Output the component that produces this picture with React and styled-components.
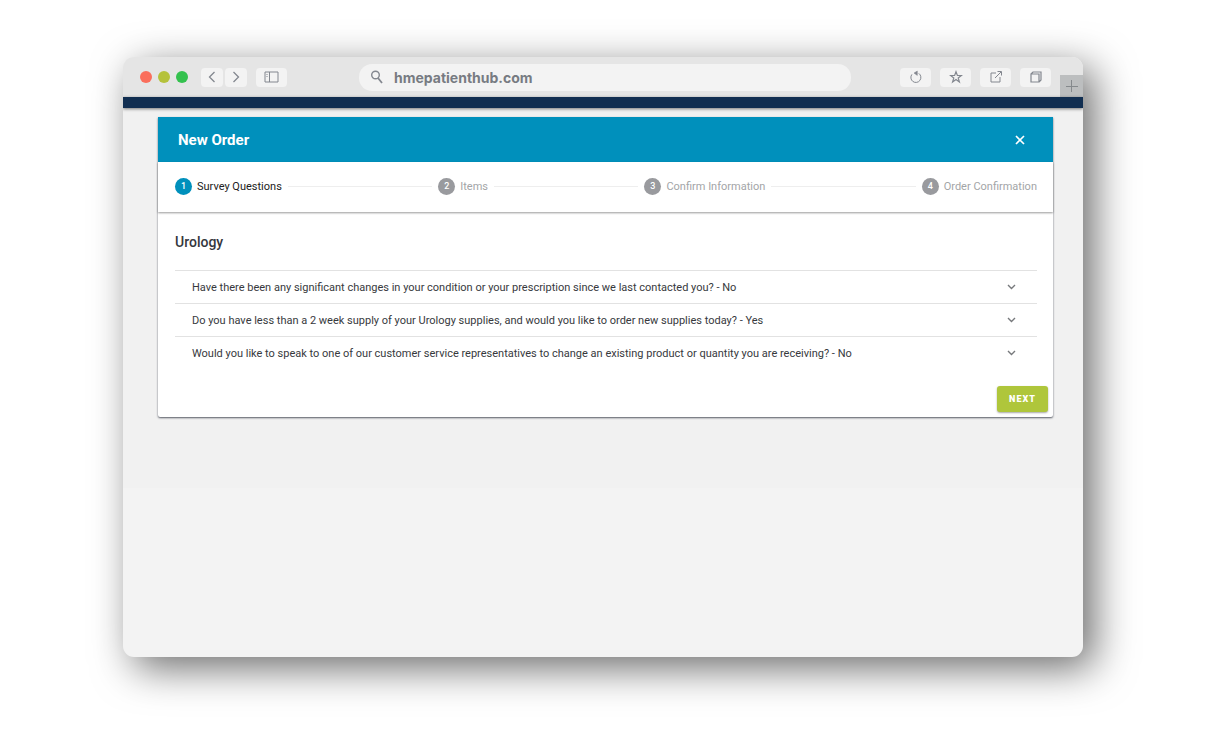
import React, { useState } from "react"
import styled, { createGlobalStyle } from "styled-components"

const GlobalStyle = createGlobalStyle`
	* {
		box-sizing: border-box;
	}
	body {
		margin: 0;
		background: #ffffff;
		font-family: Roboto, sans-serif;
	}
	button {
		border: none;
		padding: 0;
		font-family: inherit;
		cursor: pointer;
	}
`

const Page = styled.div`
	padding: 57px 123px 78px;
`

const BrowserWindow = styled.div`
	background: #f3f3f3;
	border-radius: 11px;
	overflow: hidden;
	box-shadow: 11px 11px 40px rgba(0, 0, 0, 0.58);
`

const Toolbar = styled.div`
	display: grid;
	grid-template-columns: 236px 1fr 232px;
	align-items: center;
	height: 40px;
	background: #e5e5e5;
`

const ToolbarLeft = styled.div`
	display: flex;
	align-items: center;
	padding-left: 17px;
`

const Dots = styled.div`
	display: flex;
	gap: 6px;
	margin-right: 13px;
`

const Dot = styled.span`
	width: 12px;
	height: 12px;
	border-radius: 50%;
	background: ${(props) => props.$color};
`

const ToolButton = styled.button`
	display: flex;
	align-items: center;
	justify-content: center;
	width: ${(props) => (props.$small ? 22 : 31)}px;
	height: 19px;
	border-radius: 4px;
	background: #f3f3f3;
	color: #83878f;
`

const NavButtons = styled.div`
	display: flex;
	gap: 2px;
	margin-right: 9px;
`

const AddressBar = styled.label`
	display: flex;
	align-items: center;
	gap: 10px;
	height: 27px;
	padding: 0 11px;
	border-radius: 13px;
	background: #f3f3f3;
	color: #83878f;
`

const AddressInput = styled.input`
	flex: 1;
	min-width: 0;
	padding: 0;
	border: none;
	background: transparent;
	outline: none;
	color: #777b82;
	font-family: Inter, sans-serif;
	font-size: 14px;
	font-weight: 700;
`

const ToolbarRight = styled.div`
	display: flex;
	align-items: center;
	justify-content: flex-end;
	gap: 9px;
	height: 100%;
`

const NewTab = styled.button`
	display: flex;
	align-items: center;
	justify-content: center;
	align-self: flex-end;
	width: 23px;
	height: 22px;
	background: #bcbebf;
	color: #85898c;
`

const AppBar = styled.div`
	position: relative;
	height: 11px;
	background: #112e51;
	box-shadow: 0 1px 3px rgba(0, 0, 0, 0.5);
`

const Content = styled.main`
	min-height: 380px;
	padding: 9px 30px 71px 35px;
	background: #f1f1f1;
`

const WindowFooter = styled.div`
	height: 169px;
`

const OrderCard = styled.section`
	background: #ffffff;
	border-radius: 0 0 2px 2px;
	box-shadow: 0 1px 2px rgba(20, 25, 40, 0.7);
`

const CardHeader = styled.header`
	display: flex;
	align-items: center;
	justify-content: space-between;
	height: 45px;
	padding: 0 27px 0 20px;
	background: #0090bc;
	color: #ffffff;
`

const CardTitle = styled.h1`
	margin: 0;
	font-size: 15px;
	font-weight: 700;
`

const CloseButton = styled.button`
	display: flex;
	background: transparent;
	color: #ffffff;
`

const Steps = styled.ol`
	display: flex;
	align-items: center;
	gap: 6px;
	height: 50px;
	margin: 0;
	padding: 0 16px 2px 17px;
	list-style: none;
	box-shadow: 0 1px 2px rgba(0, 0, 0, 0.4);
`

const Step = styled.li`
	display: flex;
	align-items: center;
	gap: 5px;
	color: ${(props) => (props.$active ? "#212121" : "#a3a5a7")};
	font-size: 11px;
	white-space: nowrap;
`

const StepNumber = styled.span`
	width: 17px;
	height: 17px;
	border-radius: 50%;
	background: ${(props) => (props.$active ? "#0090bc" : "#999a9e")};
	color: #ffffff;
	font-size: 9px;
	font-weight: 500;
	line-height: 17px;
	text-align: center;
`

const StepLine = styled.li`
	flex: 1;
	height: 1px;
	background: #eeeeee;
`

const Survey = styled.div`
	padding: 20px 16px 0 17px;
`

const SurveyTitle = styled.h2`
	margin: 0 0 18px;
	color: #35373d;
	font-size: 14px;
	font-weight: 500;
	line-height: 20px;
`

const Question = styled.button`
	display: flex;
	align-items: center;
	justify-content: space-between;
	width: 100%;
	min-height: 33px;
	padding: 0 20px 0 17px;
	border-top: 1px solid #e2e2e2;
	background: transparent;
	color: #37393d;
	font-size: 11px;
	text-align: left;

	svg {
		color: #77797c;
	}
`

const CardActions = styled.div`
	display: flex;
	justify-content: flex-end;
	padding: 17px 5px 5px;
`

const NextButton = styled.button`
	width: 51px;
	height: 26px;
	border-radius: 3px;
	background: #afc63b;
	color: #ffffff;
	font-size: 9px;
	font-weight: 900;
	letter-spacing: 1px;
	box-shadow: 0 1px 2px rgba(0, 0, 0, 0.35);
`

const Icon = ({ width = 14, height = 14, stroke = 1, children }) => (
	<svg
		width={width}
		height={height}
		viewBox={`0 0 ${width} ${height}`}
		fill='none'
		stroke='currentColor'
		strokeWidth={stroke}
		aria-hidden='true'
	>
		{children}
	</svg>
)

const steps = ["Survey Questions", "Items", "Confirm Information", "Order Confirmation"]

const questions = [
	"Have there been any significant changes in your condition or your prescription since we last contacted you? - No",
	"Do you have less than a 2 week supply of your Urology supplies, and would you like to order new supplies today? - Yes",
	"Would you like to speak to one of our customer service representatives to change an existing product or quantity you are receiving? - No",
]

const BrowserToolbar = () => {
	const [address, setAddress] = useState("hmepatienthub.com")
	return (
		<Toolbar>
			<ToolbarLeft>
				<Dots>
					<Dot $color='#fa6e5c' />
					<Dot $color='#b5c23c' />
					<Dot $color='#34c14e' />
				</Dots>
				<NavButtons>
					<ToolButton $small aria-label='Back'>
						<Icon stroke={1.3}>
							<path d='M9.5 2 4.5 7l5 5' />
						</Icon>
					</ToolButton>
					<ToolButton $small aria-label='Forward'>
						<Icon stroke={1.3}>
							<path d='m4.5 2 5 5-5 5' />
						</Icon>
					</ToolButton>
				</NavButtons>
				<ToolButton aria-label='Sidebar'>
					<Icon width={15} height={12}>
						<path d='M1 1h13v10H1zM5.5 1v10' />
						<path d='M2 3.5h2M2 5.5h2' strokeOpacity='0.5' />
					</Icon>
				</ToolButton>
			</ToolbarLeft>
			<AddressBar>
				<Icon stroke={1.4}>
					<circle cx='5.5' cy='5' r='3.8' />
					<path d='m8 8 4 5' strokeWidth='1.8' />
				</Icon>
				<AddressInput
					aria-label='Address'
					value={address}
					onChange={(e) => setAddress(e.target.value)}
				/>
			</AddressBar>
			<ToolbarRight>
				<ToolButton aria-label='Reload'>
					<Icon>
						<path d='M2.9 4.4a5 5 0 1 0 6.9-1' />
						<path d='M8.3 1v4.4L5 3.1z' fill='currentColor' strokeWidth='0.5' />
					</Icon>
				</ToolButton>
				<ToolButton aria-label='Bookmark'>
					<Icon stroke={1.2}>
						<path d='m7 1.7 1.4 3.8h4L9.2 7.9l1.2 4L7 9.5l-3.4 2.4 1.2-4-3.2-2.4h4z' />
					</Icon>
				</ToolButton>
				<ToolButton aria-label='Share'>
					<Icon>
						<path d='M7 3H2v9h9V7M6 8l6-6M8.5 1.5h4v4' />
					</Icon>
				</ToolButton>
				<ToolButton aria-label='Tabs'>
					<Icon stroke={1.2}>
						<path d='M2 4h8v8H2zM2 4l2-2h8v8l-2 2' />
					</Icon>
				</ToolButton>
				<NewTab aria-label='New tab'>
					<Icon>
						<path d='M6.5 1v12M1 7.5h12' />
					</Icon>
				</NewTab>
			</ToolbarRight>
		</Toolbar>
	)
}

const Stepper = ({ current }) => (
	<Steps>
		{steps.map((label, i) => (
			<React.Fragment key={label}>
				{i > 0 && <StepLine aria-hidden='true' />}
				<Step $active={i === current}>
					<StepNumber $active={i === current}>{i + 1}</StepNumber>
					{label}
				</Step>
			</React.Fragment>
		))}
	</Steps>
)

const App = () => (
	<Page>
		<GlobalStyle />
		<BrowserWindow>
			<BrowserToolbar />
			<AppBar />
			<Content>
				<OrderCard>
					<CardHeader>
						<CardTitle>New Order</CardTitle>
						<CloseButton aria-label='Close'>
							<Icon width={12} height={12} stroke={1.7}>
								<path d='m2 2 8 8M10 2l-8 8' />
							</Icon>
						</CloseButton>
					</CardHeader>
					<Stepper current={0} />
					<Survey>
						<SurveyTitle>Urology</SurveyTitle>
						{questions.map((text) => (
							<Question key={text}>
								{text}
								<Icon width={11} height={8} stroke={1.4}>
									<path d='m2 2 3.5 3.5L9 2' />
								</Icon>
							</Question>
						))}
					</Survey>
					<CardActions>
						<NextButton>NEXT</NextButton>
					</CardActions>
				</OrderCard>
			</Content>
			<WindowFooter />
		</BrowserWindow>
	</Page>
)

export default App
